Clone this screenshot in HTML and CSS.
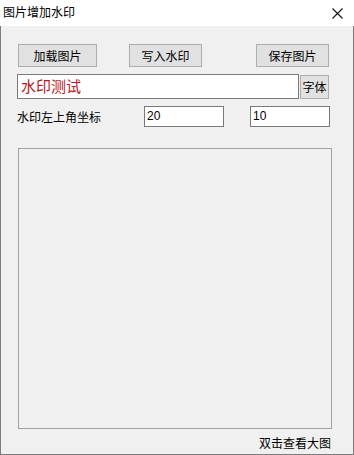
FILE: index.html
```html
<!DOCTYPE html>
<html lang="zh">
<head>
<meta charset="utf-8">
<title>图片增加水印</title>
<link rel="stylesheet" href="styles.css">
</head>
<body>
<div class="window">
  <div class="titlebar">
    <span class="title">图片增加水印</span>
    <svg class="close" width="11" height="11" viewBox="0 0 11 11"><path d="M0.5 0.5 L10.5 10.5 M10.5 0.5 L0.5 10.5" stroke="#111" stroke-width="1.1" fill="none"/></svg>
  </div>
  <div class="content">
    <div class="row row1">
      <div class="btn btn1">加载图片</div>
      <div class="btn btn2">写入水印</div>
      <div class="btn btn3">保存图片</div>
    </div>
    <div class="row row2">
      <div class="textbox">水印测试</div>
      <div class="btn fontbtn">字体</div>
    </div>
    <div class="row row3">
      <div class="label">水印左上角坐标</div>
      <div class="num numx">20</div>
      <div class="num numy">10</div>
    </div>
    <div class="picture"></div>
    <div class="footer">双击查看大图</div>
  </div>
</div>
</body>
</html>
```
FILE: styles.css
```css
* { box-sizing: border-box; }
html, body { margin: 0; padding: 0; }
body {
  width: 354px;
  height: 455px;
  overflow: hidden;
  font-family: "Noto Sans CJK SC", "Liberation Sans", sans-serif;
  font-size: 12px;
  color: #000;
  background: #f0f0f0;
}
.window {
  width: 354px;
  height: 455px;
  display: flex;
  flex-direction: column;
}
.titlebar {
  height: 26px;
  background: #fff;
  display: flex;
  align-items: center;
  justify-content: space-between;
  padding: 0 11px 2px 3px;
}
.title { font-size: 12px; line-height: 14px; }
.close { display: block; margin-top: 2px; }
.content {
  flex: 1;
  background: #f0f0f0;
  border: 1px solid #7c7c7c;
  border-top: none;
  padding-left: 16px;
  display: flex;
  flex-direction: column;
}
.row { display: flex; align-items: flex-start; }
.row1 { margin-top: 18px; height: 23px; }
.btn {
  height: 23px;
  background: #e1e1e1;
  border: 1px solid #adadad;
  display: flex;
  align-items: center;
  justify-content: center;
  line-height: 14px;
}
.btn1 { width: 79px; margin-left: 1px; }
.btn2 { width: 73px; margin-left: 32px; }
.btn3 { width: 73px; margin-left: 54px; }
.row2 { margin-top: 7px; height: 25px; }
.textbox {
  width: 282px;
  height: 25px;
  background: #fff;
  border: 1px solid #7a7a7a;
  color: #b8161e;
  font-size: 15px;
  line-height: 21px;
  padding-left: 3px;
}
.fontbtn { width: 29px; height: 24px; margin-left: 1px; margin-top: 1px; }
.row3 { margin-top: 7px; height: 21px; align-items: center; }
.label { width: 127px; line-height: 14px; }
.num {
  width: 80px;
  height: 21px;
  background: #fff;
  border: 1px solid #7a7a7a;
  font-family: "Liberation Sans", "Noto Sans CJK SC", sans-serif;
  font-size: 12px;
  line-height: 19px;
  padding-left: 2px;
}
.numy { margin-left: 26px; }
.picture {
  margin-top: 21px;
  margin-left: 1px;
  width: 314px;
  height: 281px;
  border: 1px solid #a0a0a0;
  background: #f0f0f0;
}
.footer {
  width: 314px;
  margin-top: 7px;
  text-align: right;
  line-height: 14px;
}
```
